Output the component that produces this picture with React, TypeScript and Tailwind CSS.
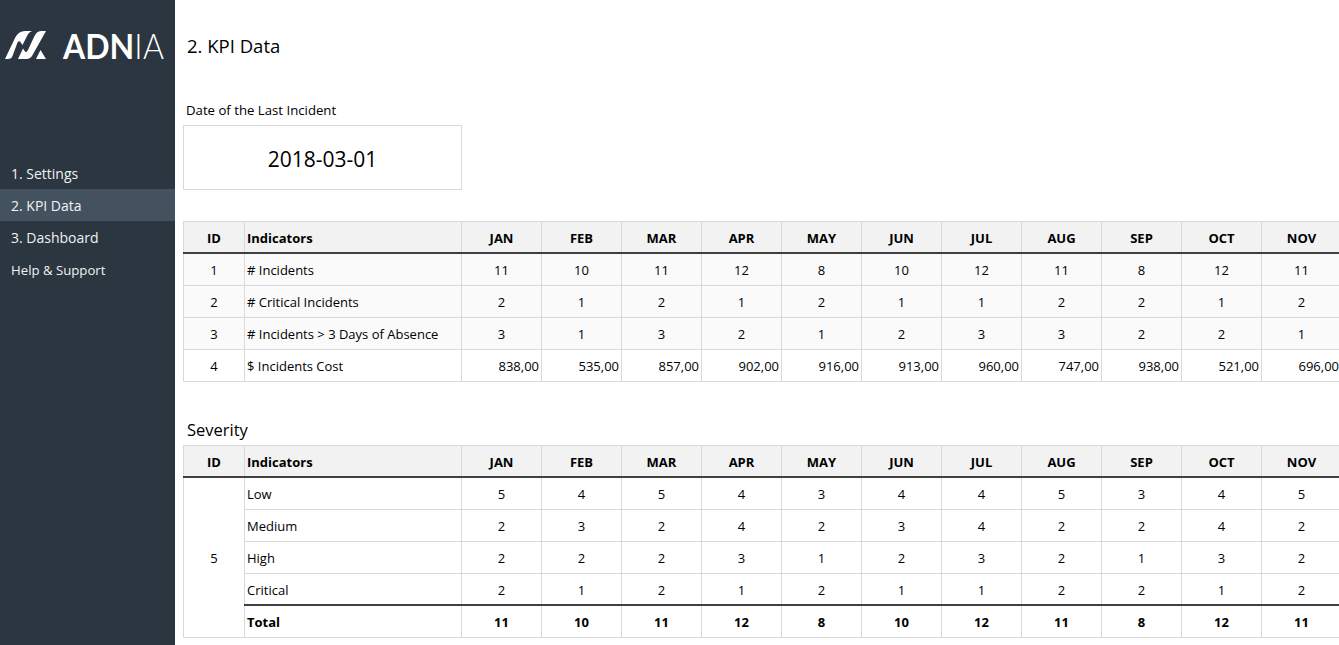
const FONT = "font-['Open_Sans','Noto_Sans',sans-serif]";
const months = ["JAN","FEB","MAR","APR","MAY","JUN","JUL","AUG","SEP","OCT","NOV"];
const kpi: [string,string,string[]][] = [
  ["1","# Incidents",["11","10","11","12","8","10","12","11","8","12","11"]],
  ["2","# Critical Incidents",["2","1","2","1","2","1","1","2","2","1","2"]],
  ["3","# Incidents > 3 Days of Absence",["3","1","3","2","1","2","3","3","2","2","1"]],
  ["4","$ Incidents Cost",["838,00","535,00","857,00","902,00","916,00","913,00","960,00","747,00","938,00","521,00","696,00"]],
];
const sev: [string,string[]][] = [
  ["Low",["5","4","5","4","3","4","4","5","3","4","5"]],
  ["Medium",["2","3","2","4","2","3","4","2","2","4","2"]],
  ["High",["2","2","2","3","1","2","3","2","1","3","2"]],
  ["Critical",["2","1","2","1","2","1","1","2","2","1","2"]],
];
const total = ["11","10","11","12","8","10","12","11","8","12","11"];
const B = "border border-[#d9d9d9]";
const TH = "border border-[#d9d9d9] border-b-2 border-b-[#404040] pt-[3px]";

function Cols() {
  return (
    <colgroup>
      <col className="w-[61px]" />
      <col className="w-[217px]" />
      {months.map((m) => <col key={m} className="w-[80px]" />)}
    </colgroup>
  );
}
function Head() {
  return (
    <thead>
      <tr className="h-[31px] bg-[#f2f2f2] font-bold">
        <th className={`${TH} text-center`}>ID</th>
        <th className={`${TH} text-left pl-[2px]`}>Indicators</th>
        {months.map((m) => <th key={m} className={`${TH} text-center`}>{m}</th>)}
      </tr>
    </thead>
  );
}
function Logo() {
  return (
    <div className="flex h-[88px] items-start pl-[5px] pt-[31px]">
      <svg width="41" height="28" viewBox="0 0 41 28" fill="#ffffff" className="shrink-0">
        <path d="M0 28 L10 7 Q13.5 0 20 0 L27 0 Q24 1 22.5 4 L17.5 14 L15 10.5 Q13.5 9.5 12.5 11.5 L7.5 25 Q6.5 28 3 28 Z" />
        <path d="M13 28 L18 17.5 L20 20.5 Q21.5 22 23 19 L29 6 Q31.5 0 36 0 L41 0 L27 25 Q25 28 21.5 28 Z" />
        <path d="M31 28 L35.5 19 L41 28 Z" />
      </svg>
      <div className="ml-[17px] -mt-[3px] flex origin-top scale-y-110 font-['Lato',sans-serif] text-[32px] leading-[32px] text-white">
        <span className="font-bold">ADN</span>
        <span className="font-light tracking-[0.5px]">IA</span>
      </div>
    </div>
  );
}
export default function App() {
  return (
    <div className={`flex h-[645px] w-[1339px] overflow-hidden bg-white text-[13px] text-black ${FONT}`}>
      <aside className="w-[175px] shrink-0 bg-[#2b3640] text-[#f0f2f4]">
        <Logo />
        <nav className="mt-[69px] flex flex-col">
          {["1. Settings","2. KPI Data","3. Dashboard","Help & Support"].map((t,i)=>(
            <div key={t} className={`flex h-[32px] items-center pl-[11px] ${i===3?"pt-[3px] text-[13.2px]":"pt-[1px] text-[14px]"} ${i===1?"bg-[#445260]":""}`}>{t}</div>
          ))}
        </nav>
      </aside>
      <main className="min-w-0 flex-1 overflow-hidden pl-[8px]">
        <h1 className="ml-[4px] mt-[33px] text-[18.5px] leading-[25px]">2. KPI Data</h1>
        <div className="ml-[3px] mt-[43px] text-[13.2px] leading-[18px]">Date of the Last Incident</div>
        <div className="mt-[6px] flex h-[65px] w-[279px] items-center justify-center border border-[#d9d9d9] pt-[4px] text-[21px]">2018-03-01</div>
        <table className="mt-[31px] w-[1158px] table-fixed border-collapse">
          <Cols />
          <Head />
          <tbody>
            {kpi.map(([id,name,vals],r)=>(
              <tr key={id} className={`${r===0?"h-[33px]":"h-[32px]"} ${id==="4"?"bg-white":"bg-[#fafafa]"}`}>
                <td className={`${B} pt-[2px] text-center`}>{id}</td>
                <td className={`${B} pl-[2px] pt-[2px] whitespace-nowrap`}>{name}</td>
                {vals.map((v,i)=>(
                  <td key={i} className={`${B} pt-[2px] ${id==="4"?"text-right pr-[2px]":"text-center"}`}>{v}</td>
                ))}
              </tr>
            ))}
          </tbody>
        </table>
        <h2 className="ml-[4px] mt-[37px] text-[16.5px] leading-[22px]">Severity</h2>
        <table className="mt-[4px] w-[1158px] table-fixed border-collapse">
          <Cols />
          <Head />
          <tbody>
            {sev.map(([name,vals],r)=>(
              <tr key={name} className={r===0?"h-[33px]":r===3?"h-[31px]":"h-[32px]"}>
                {r===0 && <td rowSpan={5} className={`${B} pt-[2px] text-center`}>5</td>}
                <td className={`${B} pl-[2px] ${r===3?"border-b-2 border-b-[#404040] pt-[4px]":"pt-[2px]"}`}>{name}</td>
                {vals.map((v,i)=>(
                  <td key={i} className={`${B} text-center ${r===3?"border-b-2 border-b-[#404040] pt-[4px]":"pt-[2px]"}`}>{v}</td>
                ))}
              </tr>
            ))}
            <tr className="h-[33px] font-bold">
              <td className={`${B} pl-[2px] pt-[3px]`}>Total</td>
              {total.map((v,i)=><td key={i} className={`${B} pt-[3px] text-center`}>{v}</td>)}
            </tr>
          </tbody>
        </table>
      </main>
    </div>
  );
}
